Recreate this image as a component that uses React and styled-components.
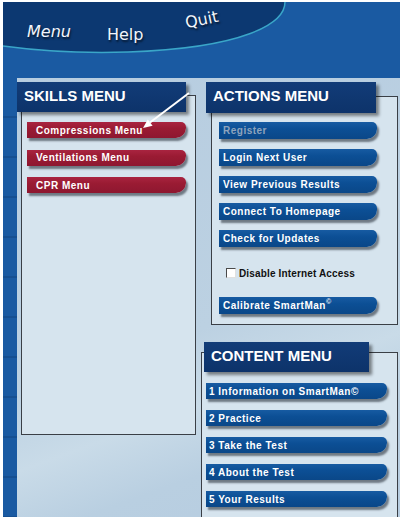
import React from 'react';
import styled, { createGlobalStyle } from 'styled-components';

const GlobalStyle = createGlobalStyle`
    body {
        margin: 0;
        background: #ffffff;
        font-family: "Liberation Sans", Arial, sans-serif;
    }
`;

const Frame = styled.div`
    width: 397px;
    height: 515px;
    margin: 2px 0 0 3px;
    background: #1a5aa2;
    display: flex;
    flex-direction: column;
    overflow: hidden;
`;

const Header = styled.header`
    position: relative;
    height: 76px;
    flex-shrink: 0;
`;

const HeaderShape = styled.svg`
    position: absolute;
    inset: 0;
`;

const Nav = styled.nav`
    position: relative;
    display: flex;
    align-items: flex-start;
    gap: 36px;
    padding: 17px 0 0 24px;
`;

const NavItem = styled.span`
    font-family: "DejaVu Sans", Verdana, sans-serif;
    font-size: 16px;
    line-height: 20px;
    color: #f1f5fb;
    font-style: ${p => (p.$slant ? 'oblique' : 'normal')};
    text-shadow: 1px 2px 2px rgba(0, 0, 0, 0.6);
    transform: translateY(${p => p.$lift || 0}px) rotate(${p => p.$tilt || 0}deg);
    margin-left: ${p => p.$push || 0}px;
    cursor: pointer;
`;

const Body = styled.div`
    flex: 1;
    display: flex;
`;

const Strip = styled.div`
    width: 14px;
    flex-shrink: 0;
    background: repeating-linear-gradient(180deg, #1a5aa2 0 38px, #164f91 38px 40px);
`;

const Main = styled.main`
    flex: 1;
    display: grid;
    grid-template-columns: 179px 197px;
    column-gap: 5px;
    align-items: start;
    padding-top: 4px;
    background: linear-gradient(160deg, #b7cde0 0%, #bcd1e2 55%, #c9dbe8 68%, #b9cfe1 80%, #b6cce0 100%);
`;

const Column = styled.div`
    position: relative;
    display: flex;
    flex-direction: column;
`;

const Section = styled.section`
    display: flex;
    flex-direction: column;
    margin-top: ${p => p.$top || 0}px;
`;

const Title = styled.h2`
    position: relative;
    z-index: 1;
    margin: 0 0 0 ${p => p.$indent || 0}px;
    width: ${p => p.$width}px;
    height: ${p => p.$height || 30}px;
    box-sizing: border-box;
    padding: 6px 0 0 7px;
    background: linear-gradient(180deg, #123c78 0%, #0d336a 100%);
    box-shadow: 3px 3px 3px rgba(0, 0, 0, 0.45);
    color: #ffffff;
    font-size: 15px;
    line-height: 16px;
    font-weight: bold;
`;

const Box = styled.div`
    margin: ${p => p.$overlap}px 0 0 ${p => p.$indent || 0}px;
    width: ${p => p.$width}px;
    height: ${p => p.$height}px;
    box-sizing: border-box;
    border: 1px solid #3a3f46;
    background: #d6e4ee;
    padding: ${p => p.$padTop}px 0 0 ${p => p.$padLeft}px;
    display: flex;
    flex-direction: column;
    gap: ${p => p.$gap}px;
`;

const MenuButton = styled.button`
    display: block;
    width: ${p => p.$width}px;
    height: ${p => p.$height || 16}px;
    flex-shrink: 0;
    box-sizing: border-box;
    padding: 0 0 0 ${p => p.$pad || 4}px;
    border: none;
    border-radius: 0 5px 10px 0;
    text-align: left;
    font-family: "Liberation Sans", Arial, sans-serif;
    font-size: 10px;
    font-weight: bold;
    letter-spacing: 0.5px;
    color: ${p => (p.$muted ? '#8ea4bd' : '#ffffff')};
    background: ${p =>
        p.$tone === 'red'
            ? 'linear-gradient(180deg, #a92440 0%, #9a1b33 40%, #8e1730 100%)'
            : 'linear-gradient(180deg, #175ba2 0%, #0c4f95 40%, #0a4788 100%)'};
    box-shadow: 2px 3px 2px rgba(25, 32, 44, 0.55);
    cursor: pointer;
`;

const Sup = styled.sup`
    font-size: 7px;
    line-height: 0;
    vertical-align: 5px;
`;

const CheckRow = styled.label`
    display: flex;
    align-items: center;
    gap: 3px;
    margin: 10px 0 8px 7px;
    height: 12px;
    font-size: 10px;
    font-weight: bold;
    letter-spacing: 0.15px;
    color: #111111;
`;

const CheckBox = styled.span`
    width: 8px;
    height: 8px;
    background: #ffffff;
    border: 1px solid;
    border-color: #4a4a4a #e0e0e0 #e0e0e0 #4a4a4a;
`;

const Arrow = styled.svg`
    position: absolute;
    z-index: 2;
    left: 0;
    top: 0;
    overflow: visible;
    pointer-events: none;
`;

const skills = ['Compressions Menu', 'Ventilations Menu', 'CPR Menu'];
const actions = ['Register', 'Login Next User', 'View Previous Results', 'Connect To Homepage', 'Check for Updates'];
const content = ['1 Information on SmartMan©', '2 Practice', '3 Take the Test', '4 About the Test', '5 Your Results'];

const App = () => {
    return <>
        <GlobalStyle />
        <Frame>
            <Header>
                <HeaderShape width="397" height="76" viewBox="0 0 397 76">
                    <path d="M0,0 L282,0 C282,22 240,46 125,50 C60,52 22,47 0,44 Z" fill="#0c3871" />
                    <path d="M282,0 C282,22 240,46 125,50 C60,52 22,47 0,44" fill="none" stroke="#3aa6c8" strokeWidth="1.5" />
                </HeaderShape>
                <Nav>
                    <NavItem $slant $lift={3}>Menu</NavItem>
                    <NavItem $lift={6}>Help</NavItem>
                    <NavItem $lift={-9} $tilt={-12} $push={6}>Quit</NavItem>
                </Nav>
            </Header>
            <Body>
                <Strip />
                <Main>
                    <Column>
                        <Section>
                            <Title $width={169}>SKILLS MENU</Title>
                            <Box $overlap={-17} $indent={4} $width={175} $height={340} $padTop={26} $padLeft={5} $gap={11.5}>
                                {skills.map(label => (
                                    <MenuButton key={label} $tone="red" $width={159} $pad={9}>{label}</MenuButton>
                                ))}
                            </Box>
                        </Section>
                        <Arrow width="179" height="60">
                            <line x1="172" y1="11" x2="133" y2="40.5" stroke="#ffffff" strokeWidth="2" />
                            <polygon points="126,46 135.6,43.7 130.8,37.4" fill="#ffffff" />
                        </Arrow>
                    </Column>
                    <Column>
                        <Section>
                            <Title $indent={5} $width={170} $height={31}>ACTIONS MENU</Title>
                            <Box $overlap={-17} $indent={10} $width={187} $height={229} $padTop={25} $padLeft={7} $gap={10}>
                                {actions.map((label, i) => (
                                    <MenuButton key={label} $width={158} $height={17} $muted={i === 0}>{label}</MenuButton>
                                ))}
                                <CheckRow>
                                    <CheckBox />
                                    Disable Internet Access
                                </CheckRow>
                                <MenuButton $width={158} $height={17}>Calibrate SmartMan<Sup>©</Sup></MenuButton>
                            </Box>
                        </Section>
                        <Section $top={17}>
                            <Title $indent={3} $width={165}>CONTENT MENU</Title>
                            <Box $overlap={-20} $width={197} $height={166} $padTop={30} $padLeft={4} $gap={11}>
                                {content.map(label => (
                                    <MenuButton key={label} $width={181} $pad={3}>{label}</MenuButton>
                                ))}
                            </Box>
                        </Section>
                    </Column>
                </Main>
            </Body>
        </Frame>
    </>;
};

export default App;
